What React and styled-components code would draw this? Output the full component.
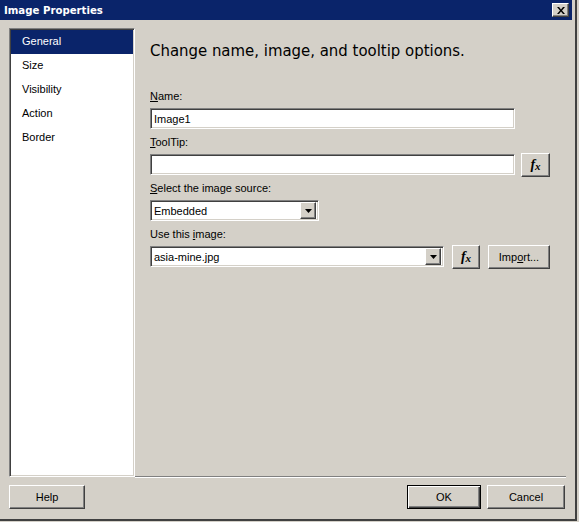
import React, { useState } from 'react';
import styled, { createGlobalStyle, css } from 'styled-components';

const GlobalStyle = createGlobalStyle`
  html, body {
    margin: 0;
    padding: 0;
    background: #d4d0c8;
  }
  body {
    font-family: "Liberation Sans", Arial, sans-serif;
    font-size: 11px;
    color: #000;
  }
`;

const sunken = css`
  border-top: 1px solid #808080;
  border-left: 1px solid #808080;
  border-bottom: 1px solid #ffffff;
  border-right: 1px solid #ffffff;
  box-shadow: inset 1px 1px 0 #404040, inset -1px -1px 0 #d4d0c8;
`;

const raised = css`
  border-top: 1px solid #ffffff;
  border-left: 1px solid #ffffff;
  border-bottom: 1px solid #404040;
  border-right: 1px solid #404040;
  box-shadow: inset -1px -1px 0 #808080, inset 1px 1px 0 #d4d0c8;
`;

const navItems = ['General', 'Size', 'Visibility', 'Action', 'Border'];

const App = () => {
  const [active, setActive] = useState('General');

  return (
    <>
      <GlobalStyle />
      <Window>
        <TitleBar>
          <Title>Image Properties</Title>
          <CloseButton>
            <svg width="8" height="7" viewBox="0 0 8 7">
              <path d="M0 0h2l2 2.5L6 0h2L5 3.5 8 7H6L4 4.5 2 7H0l3-3.5z" fill="#000" />
            </svg>
          </CloseButton>
        </TitleBar>

        <Main>
          <NavList>
            {navItems.map((item) => (
              <NavItem key={item} $active={active === item} onClick={() => setActive(item)}>
                {item}
              </NavItem>
            ))}
          </NavList>

          <Content>
            <Heading>Change name, image, and tooltip options.</Heading>

            <Field $first>
              <Label><u>N</u>ame:</Label>
              <Row>
                <TextInput $width={365} defaultValue="Image1" />
              </Row>
            </Field>

            <Field>
              <Label><u>T</u>oolTip:</Label>
              <Row>
                <TextInput $width={365} defaultValue="" />
                <FxButton $width={29} $gap={6}>f<sub>x</sub></FxButton>
              </Row>
            </Field>

            <Field>
              <Label><u>S</u>elect the image source:</Label>
              <Row>
                <Combo $width={169}>
                  <ComboText>Embedded</ComboText>
                  <ComboArrow>
                    <svg width="7" height="4" viewBox="0 0 7 4">
                      <path d="M0 0h7L3.5 4z" fill="#000" />
                    </svg>
                  </ComboArrow>
                </Combo>
              </Row>
            </Field>

            <Field>
              <Label>Use this <u>i</u>mage:</Label>
              <Row>
                <Combo $width={294}>
                  <ComboText>asia-mine.jpg</ComboText>
                  <ComboArrow>
                    <svg width="7" height="4" viewBox="0 0 7 4">
                      <path d="M0 0h7L3.5 4z" fill="#000" />
                    </svg>
                  </ComboArrow>
                </Combo>
                <FxButton $width={28} $gap={8}>f<sub>x</sub></FxButton>
                <Button $width={62} $gap={8}>Imp<u>o</u>rt...</Button>
              </Row>
            </Field>
          </Content>
        </Main>

        <Footer>
          <Button $width={76}>Help</Button>
          <Spacer />
          <Button $width={74} $default>OK</Button>
          <Button $width={78} $gap={6}>Cancel</Button>
        </Footer>
      </Window>
    </>
  );
};

const Window = styled.div`
  width: 574px;
  height: 519px;
  padding-right: 1px;
  background: #d4d0c8;
  border-right: 2px solid #404040;
  border-bottom: 2px solid #404040;
  display: flex;
  flex-direction: column;
`;

const TitleBar = styled.div`
  height: 20px;
  width: 572px;
  background: #0a246a;
  display: flex;
  align-items: center;
  justify-content: space-between;
  padding: 0 3px 0 4px;
  box-sizing: border-box;
`;

const Title = styled.span`
  color: #fff;
  font-weight: bold;
  font-size: 11.3px;
  font-family: "DejaVu Sans Condensed", "Liberation Sans", sans-serif;
`;

const CloseButton = styled.div`
  width: 17px;
  height: 14px;
  box-sizing: border-box;
  background: #d4d0c8;
  ${raised};
  display: flex;
  align-items: center;
  justify-content: center;
`;

const Main = styled.div`
  display: flex;
  margin-top: 8px;
  padding-left: 9px;
  height: 449px;
`;

const NavList = styled.div`
  width: 126px;
  height: 449px;
  box-sizing: border-box;
  background: #fff;
  ${sunken};
  padding: 1px 1px;
  display: flex;
  flex-direction: column;
`;

const NavItem = styled.div`
  height: 24px;
  line-height: 23px;
  padding-left: 11px;
  cursor: default;
  background: ${({ $active }) => ($active ? '#0a246a' : 'transparent')};
  color: ${({ $active }) => ($active ? '#fff' : '#000')};
`;

const Content = styled.div`
  flex: 1;
  margin-right: 8px;
  padding-left: 15px;
  border-bottom: 1px solid #808080;
  box-shadow: 0 1px 0 #fff;
  display: flex;
  flex-direction: column;
`;

const Heading = styled.h2`
  margin: 13px 0 0;
  font-size: 16.6px;
  line-height: 20px;
  font-weight: normal;
  font-family: "DejaVu Sans Condensed", "Liberation Sans", sans-serif;
`;

const Field = styled.div`
  display: flex;
  flex-direction: column;
  margin-top: ${({ $first }) => ($first ? '28px' : '6px')};
`;

const Label = styled.label`
  height: 14px;
  line-height: 14px;
  margin-bottom: 5px;
  color: #000;
`;

const Row = styled.div`
  display: flex;
  align-items: center;
  height: 21px;
`;

const TextInput = styled.input`
  width: ${({ $width }) => $width}px;
  height: 21px;
  margin: 0;
  flex-shrink: 0;
  box-sizing: border-box;
  ${sunken};
  background: #fff;
  padding: 0 3px;
  font-family: "Liberation Sans", Arial, sans-serif;
  font-size: 11px;
  outline: none;
`;

const Combo = styled.div`
  width: ${({ $width }) => $width}px;
  height: 21px;
  flex-shrink: 0;
  box-sizing: border-box;
  ${sunken};
  background: #fff;
  display: flex;
  align-items: center;
  padding: 2px;
`;

const ComboText = styled.span`
  flex: 1;
  padding-left: 1px;
`;

const ComboArrow = styled.div`
  width: 16px;
  height: 17px;
  box-sizing: border-box;
  background: #d4d0c8;
  ${raised};
  display: flex;
  align-items: center;
  justify-content: center;
`;

const Button = styled.div`
  width: ${({ $width }) => $width}px;
  height: 24px;
  flex-shrink: 0;
  box-sizing: border-box;
  margin-left: ${({ $gap }) => ($gap ? `${$gap}px` : '0')};
  background: #d4d0c8;
  ${raised};
  ${({ $default }) =>
    $default &&
    css`
      border: 1px solid #000;
      box-shadow: inset 1px 1px 0 #fff, inset -1px -1px 0 #404040, inset -2px -2px 0 #808080;
    `}
  display: flex;
  align-items: center;
  justify-content: center;
  cursor: default;
`;

const FxButton = styled(Button)`
  font-family: "Liberation Serif", "Times New Roman", serif;
  font-weight: bold;
  font-style: italic;
  font-size: 14px;

  sub {
    font-size: 11px;
    vertical-align: baseline;
    position: relative;
    top: 1px;
  }
`;

const Footer = styled.div`
  display: flex;
  margin-top: 8px;
  padding: 0 9px;
  width: 574px;
  box-sizing: border-box;
`;

const Spacer = styled.div`
  flex: 1;
`;

export default App;
